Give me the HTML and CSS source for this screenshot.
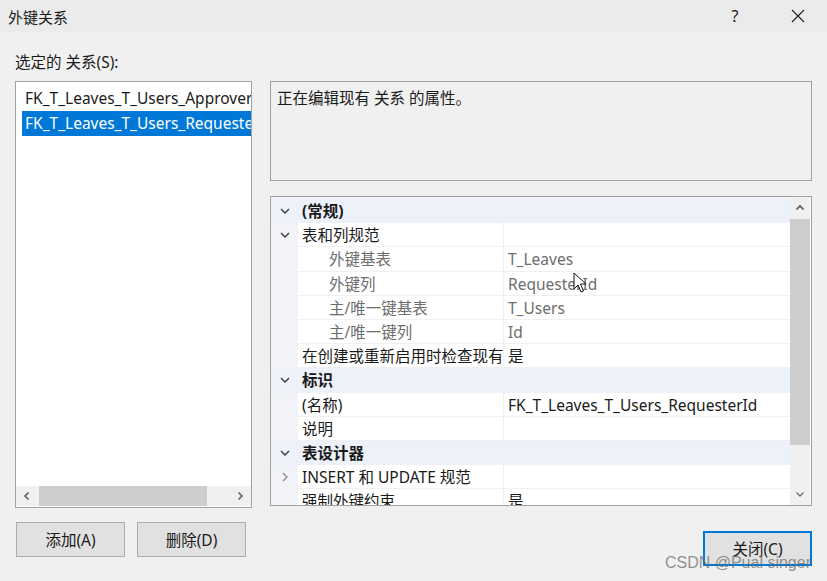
FILE: index.html
```html
<!DOCTYPE html>
<html lang="zh-CN">
<head>
    <meta charset="UTF-8">
    <title>外键关系</title>
    <link rel="stylesheet" href="styles.css">
</head>
<body>
    <div class="dialog">
        <div class="titlebar">
            <span class="title">外键关系</span>
            <span class="title-help">?</span>
            <svg class="title-close" width="14" height="14" viewBox="0 0 14 14">
                <path d="M1 1 L13 13 M13 1 L1 13" stroke="#222" stroke-width="1.2" fill="none"/>
            </svg>
        </div>

        <div class="content">
            <div class="col-left">
                <div class="label">选定的 关系(S):</div>
                <div class="listbox">
                    <div class="list-items">
                        <div class="list-item">FK_T_Leaves_T_Users_ApproverId</div>
                        <div class="list-item selected">FK_T_Leaves_T_Users_RequesterId</div>
                    </div>
                    <div class="hscroll">
                        <svg class="arrow" width="10" height="10" viewBox="0 0 10 10"><path d="M6.5 1.5 L3 5 L6.5 8.5" stroke="#606060" stroke-width="1.6" fill="none"/></svg>
                        <div class="hscroll-track"><div class="hscroll-thumb"></div></div>
                        <svg class="arrow" width="10" height="10" viewBox="0 0 10 10"><path d="M3.5 1.5 L7 5 L3.5 8.5" stroke="#606060" stroke-width="1.6" fill="none"/></svg>
                    </div>
                </div>
                <div class="left-buttons">
                    <button class="btn">添加(A)</button>
                    <button class="btn">删除(D)</button>
                </div>
            </div>

            <div class="col-right">
                <div class="description">正在编辑现有 关系 的属性。</div>

                <div class="propgrid">
                    <div class="rows">
                        <div class="row category">
                            <span class="gutter"><svg width="10" height="6" viewBox="0 0 10 6"><path d="M1 1 L5 5 L9 1" stroke="#444" stroke-width="1.5" fill="none"/></svg></span>
                            <span class="cat-name">(常规)</span>
                        </div>
                        <div class="row">
                            <span class="gutter"><svg width="10" height="6" viewBox="0 0 10 6"><path d="M1 1 L5 5 L9 1" stroke="#444" stroke-width="1.5" fill="none"/></svg></span>
                            <span class="name">表和列规范</span>
                            <span class="value"></span>
                        </div>
                        <div class="row sub readonly">
                            <span class="gutter"></span>
                            <span class="name">外键基表</span>
                            <span class="value">T_Leaves</span>
                        </div>
                        <div class="row sub readonly">
                            <span class="gutter"></span>
                            <span class="name">外键列</span>
                            <span class="value">RequesterId</span>
                        </div>
                        <div class="row sub readonly">
                            <span class="gutter"></span>
                            <span class="name">主/唯一键基表</span>
                            <span class="value">T_Users</span>
                        </div>
                        <div class="row sub readonly">
                            <span class="gutter"></span>
                            <span class="name">主/唯一键列</span>
                            <span class="value">Id</span>
                        </div>
                        <div class="row">
                            <span class="gutter"></span>
                            <span class="name">在创建或重新启用时检查现有</span>
                            <span class="value">是</span>
                        </div>
                        <div class="row category">
                            <span class="gutter"><svg width="10" height="6" viewBox="0 0 10 6"><path d="M1 1 L5 5 L9 1" stroke="#444" stroke-width="1.5" fill="none"/></svg></span>
                            <span class="cat-name">标识</span>
                        </div>
                        <div class="row">
                            <span class="gutter"></span>
                            <span class="name">(名称)</span>
                            <span class="value">FK_T_Leaves_T_Users_RequesterId</span>
                        </div>
                        <div class="row">
                            <span class="gutter"></span>
                            <span class="name">说明</span>
                            <span class="value"></span>
                        </div>
                        <div class="row category">
                            <span class="gutter"><svg width="10" height="6" viewBox="0 0 10 6"><path d="M1 1 L5 5 L9 1" stroke="#444" stroke-width="1.5" fill="none"/></svg></span>
                            <span class="cat-name">表设计器</span>
                        </div>
                        <div class="row">
                            <span class="gutter"><svg width="6" height="10" viewBox="0 0 6 10"><path d="M1 1 L5 5 L1 9" stroke="#8a8a8a" stroke-width="1.3" fill="none"/></svg></span>
                            <span class="name">INSERT 和 UPDATE 规范</span>
                            <span class="value"></span>
                        </div>
                        <div class="row">
                            <span class="gutter"></span>
                            <span class="name">强制外键约束</span>
                            <span class="value">是</span>
                        </div>
                    </div>
                    <div class="vscroll">
                        <svg class="arrow" width="10" height="10" viewBox="0 0 10 10"><path d="M1.5 6.5 L5 3 L8.5 6.5" stroke="#505050" stroke-width="1.6" fill="none"/></svg>
                        <div class="vscroll-track"><div class="vscroll-thumb"></div></div>
                        <svg class="arrow" width="10" height="10" viewBox="0 0 10 10"><path d="M1.5 3.5 L5 7 L8.5 3.5" stroke="#707070" stroke-width="1.3" fill="none"/></svg>
                    </div>
                    <svg class="cursor" width="14" height="22" viewBox="0 0 14 22">
                        <path d="M1 1 L1 17 L5 13 L8 20 L10.5 19 L7.5 12 L13 12 Z" fill="#fff" stroke="#111" stroke-width="1"/>
                    </svg>
                </div>

                <div class="right-buttons">
                    <button class="btn btn-default">关闭(C)</button>
                </div>
            </div>
        </div>

        <div class="watermark">CSDN @Pual singer</div>
    </div>
</body>
</html>
```

FILE: styles.css
```css
:root {
    --dialog: #f0f0f0;
    --titlebar: #ebebeb;
    --font: #1a1a1a;
    --border: #a0a0a0;
    --select: #0078d7;
    --scroll: #f0f0f0;
    --thumb: #cdcdcd;
    --category: #edf1f9;
    --gutter: #f1f3f7;
    --line: #f0f0f0;
    --readonly: #6d6d6d;
    --btn: #e1e1e1;
    --btn-border: #adadad;
}

*,
*::before,
*::after {
    box-sizing: border-box;
    padding: 0;
    margin: 0;
}

html,
body {
    width: 827px;
    height: 581px;
    overflow: hidden;
}

body {
    background-color: var(--dialog);
    color: var(--font);
    font-family: 'Noto Sans', 'Noto Sans CJK SC', sans-serif;
    font-size: 15.5px;
}

button {
    color: inherit;
    font-family: inherit;
    font-size: inherit;
    outline: none;
}

.dialog {
    position: relative;
    width: 827px;
    height: 581px;
}

.titlebar {
    display: flex;
    align-items: center;
    height: 32px;
    padding: 0 0 0 8px;
    background-color: var(--titlebar);
}

.title {
    flex: 1;
    font-size: 15px;
}

.title-help {
    width: 20px;
    margin-right: 46px;
    text-align: center;
    font-size: 16px;
}

.title-close {
    margin-right: 22px;
}

.content {
    display: grid;
    grid-template-columns: 237px 542px;
    column-gap: 18px;
    padding: 0 15px;
}

.label {
    height: 20px;
    margin: 20px 0 9px;
    line-height: 20px;
}

.listbox {
    display: flex;
    flex-direction: column;
    height: 427px;
    border: 1px solid var(--border);
    background-color: #fff;
}

.list-items {
    flex: 1;
    padding: 4px 0 0 6px;
    overflow: hidden;
}

.list-item {
    height: 25px;
    padding-left: 3px;
    line-height: 25px;
    white-space: nowrap;
}

.list-item.selected {
    background-color: var(--select);
    color: #fff;
}

.hscroll {
    display: flex;
    align-items: center;
    height: 20px;
    margin-bottom: 1px;
    background-color: var(--scroll);
}

.hscroll .arrow {
    margin: 0 6px;
}

.hscroll-track {
    flex: 1;
    height: 100%;
    padding: 0 22px 0 1px;
}

.hscroll-thumb {
    height: 100%;
    background-color: var(--thumb);
}

.left-buttons {
    display: flex;
    gap: 12px;
    margin-top: 14px;
    padding-left: 1px;
}

.btn {
    width: 109px;
    height: 35px;
    border: 1px solid var(--btn-border);
    background-color: var(--btn);
}

.btn-default {
    border: 2px solid var(--select);
}

.col-right {
    padding-top: 49px;
}

.description {
    height: 100px;
    padding: 4px 6px;
    border: 1px solid var(--border);
    line-height: 24px;
}

.propgrid {
    position: relative;
    display: flex;
    height: 310px;
    margin-top: 15px;
    border: 1px solid var(--border);
    background-color: #fff;
    overflow: hidden;
}

.rows {
    flex: 1;
    padding-top: 2px;
    background-color: var(--gutter);
}

.row {
    display: flex;
    height: 24.2px;
    line-height: 24px;
    white-space: nowrap;
}

.gutter {
    display: flex;
    align-items: center;
    justify-content: center;
    width: 27px;
    flex-shrink: 0;
}

.name {
    width: 205px;
    padding-left: 4px;
    overflow: hidden;
    border-bottom: 1px solid var(--line);
    background-color: #fff;
}

.value {
    flex: 1;
    padding-left: 4px;
    border-left: 1px solid var(--line);
    border-bottom: 1px solid var(--line);
    background-color: #fff;
}

.row:first-child .name,
.row:first-child .value {
    border-bottom: none;
}

.sub .name {
    padding-left: 31px;
}

.readonly .name,
.readonly .value {
    color: var(--readonly);
}

.category {
    background-color: var(--category);
}

.cat-name {
    padding-left: 4px;
    font-weight: bold;
}

.vscroll {
    display: flex;
    flex-direction: column;
    align-items: center;
    width: 20px;
    margin-right: 1px;
    background-color: var(--scroll);
}

.vscroll .arrow {
    margin: 6px 0;
}

.vscroll-track {
    flex: 1;
    width: 100%;
    padding: 0 0 38px;
}

.vscroll-thumb {
    height: 100%;
    background-color: var(--thumb);
}

.cursor {
    position: absolute;
    left: 302px;
    top: 75px;
}

.right-buttons {
    display: flex;
    justify-content: flex-end;
    margin-top: 25px;
}

.watermark {
    position: absolute;
    right: 16px;
    bottom: 9px;
    color: rgba(110, 110, 110, 0.75);
    font-family: 'Liberation Sans', sans-serif;
    font-size: 16px;
}
```
